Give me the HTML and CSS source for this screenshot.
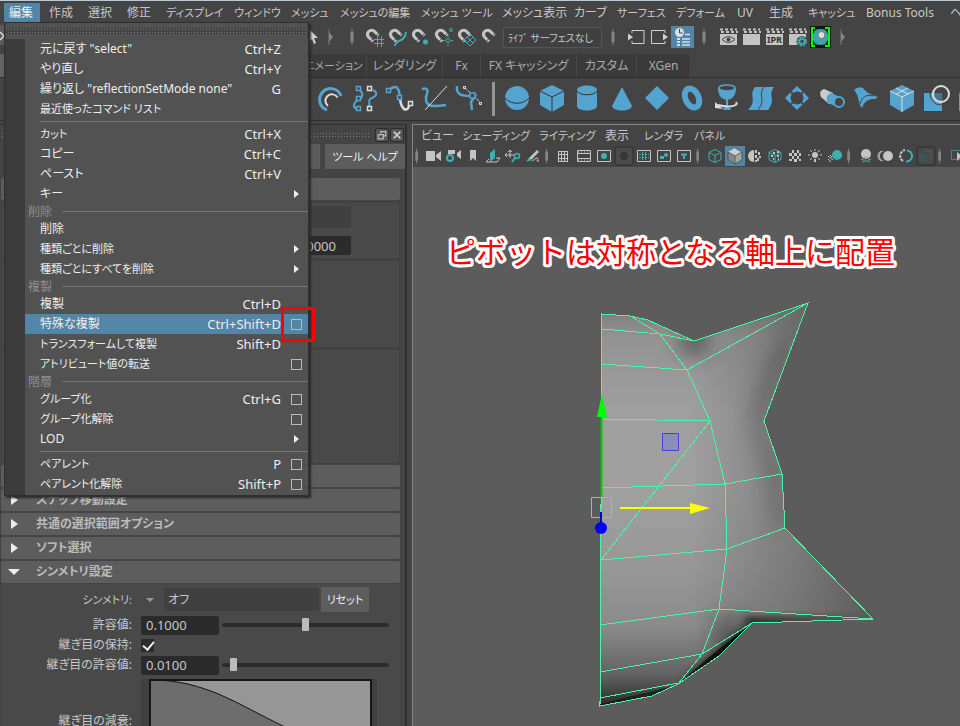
FILE: index.html
```
<!DOCTYPE html>
<html lang="ja">
<head>
<meta charset="utf-8">
<title>編集</title>
<link rel="stylesheet" href="styles.css">
</head>
<body>
<svg class="defs" aria-hidden="true">
  <defs>
    <symbol id="mark" viewBox="0 0 8 24"><path d="M4 4v16" stroke="#858585"/><path d="M4 7v10" stroke="#858585" stroke-width="3"/></symbol>
    <symbol id="mark-end" viewBox="0 0 8 24"><path d="M3 4v16" stroke="#777"/><path d="M3 7l4 5-4 5z" fill="#858585"/></symbol>
    <symbol id="magnet" viewBox="0 0 23 24"><path d="M9 16.500L4.500 12C1.500 8 6 3.500 10 6l4.500 4.500" fill="none" stroke="#c4c4c4" stroke-width="3"/><path d="M6 16.500l3-3M11.500 11.500l3-3" stroke="#444"/></symbol>
    <symbol id="clap" viewBox="0 0 23 24"><path d="M3 9h17v11H3z" fill="#c4c4c4"/><path d="M3 4.500h17M4 7h17" stroke="#c4c4c4" stroke-width="2" stroke-dasharray="3 2"/></symbol>
    <symbol id="frame" viewBox="0 0 20 20"><path d="M3.500 4.500h13v11h-13z" fill="none" stroke="#c4c4c4"/></symbol>
  </defs>
</svg>
<div class="app">
  <nav class="menubar">
    <button class="open">編集</button><button>作成</button><button>選択</button><button>修正</button><button class="k">ディスプレイ</button><button class="k">ウィンドウ</button><button class="k">メッシュ</button><button class="k">メッシュの編集</button><button class="k">メッシュ ツール</button><button>メッシュ表示</button><button>カーブ</button><button class="k">サーフェス</button><button class="k">デフォーム</button><button>UV</button><button>生成</button><button class="k">キャッシュ</button><button>Bonus Tools</button><button>ヘ</button>
  </nav>

  <div class="status">
    <svg class="edge" viewBox="0 0 5 24"><path d="M0 0h5v20H0z" fill="#5a5a5a"/><path d="M0 7l4 4-4 4" fill="none" stroke="#ddd" stroke-width="1.500"/></svg>
    <svg viewBox="0 0 23 24"><path d="M14 4v13l3-3 2 5 2-1-2-5h4z" fill="#d0d0d0"/></svg>
    <svg viewBox="0 0 23 24"><use href="#mark-end" x="8" width="8" height="24"/></svg>
    <svg viewBox="0 0 23 24"><use href="#mark" x="7" width="8" height="24"/></svg>
    <svg viewBox="0 0 23 24"><use href="#magnet" width="23" height="24"/><path d="M13.500 11v11M17.500 11v11M10 14.500h10M10 18.500h10" stroke="#3db0b4"/></svg>
    <svg viewBox="0 0 23 24"><use href="#magnet" width="23" height="24"/><path d="M8 21c0-7 10-3 11-14" fill="none" stroke="#3db0b4" stroke-width="2"/></svg>
    <svg viewBox="0 0 23 24"><use href="#magnet" width="23" height="24"/><circle cx="15.500" cy="17" r="2.500" fill="#3db0b4"/></svg>
    <svg viewBox="0 0 23 24"><use href="#magnet" width="23" height="24"/><g fill="none" stroke="#3db0b4"><circle cx="18" cy="5" r="1.500"/><circle cx="15" cy="15.500" r="2"/><path d="M15 10v2M15 19v2M10 15.500h2M18 15.500h2"/></g></svg>
    <svg viewBox="0 0 23 24"><use href="#magnet" width="23" height="24"/><path d="M8 15l6-6 6 6-6 6zM11 12l6 6M17 12l-6 6" fill="none" stroke="#3db0b4"/></svg>
    <svg viewBox="0 0 23 24"><use href="#magnet" x="1" width="23" height="24"/></svg>
    <input class="live" type="text" aria-label="ライブ サーフェス" value="ﾗｲﾌﾞ サーフェスなし">
    <svg viewBox="0 0 23 24"><use href="#mark" x="7" width="8" height="24"/></svg>
    <svg viewBox="0 0 23 24"><path d="M7 8V5.500h12v13H7V16" fill="none" stroke="#d0d0d0"/><path d="M3 8.500l5 3.500-5 3.500z" fill="#d0d0d0"/></svg>
    <svg viewBox="0 0 23 24"><path d="M17 8V5.500H3.500v13H17V16" fill="none" stroke="#d0d0d0"/><path d="M15 8.500l5 3.500-5 3.500z" fill="#d0d0d0"/></svg>
    <svg viewBox="0 0 23 24"><path d="M0 1h23v22H0z" fill="#5285a6"/><circle cx="8.500" cy="7.500" r="4.500" fill="#ddd"/><path d="M8.500 4v4h3" fill="none" stroke="#444"/><path d="M14 9.500h5M11 14h8M11 17h8M11 20h8" stroke="#ddd" stroke-width="1.500"/><path d="M6 14h3M6 17h3M6 20h3" stroke="#ddd" stroke-width="2"/></svg>
    <svg viewBox="0 0 23 24"><use href="#mark" x="6" width="8" height="24"/></svg>
    <svg viewBox="0 0 23 24"><use href="#clap" width="23" height="24"/><path d="M5 14.500q6.500-6 13 0q-6.500 6-13 0z" fill="#c4c4c4" stroke="#444"/><circle cx="11.500" cy="14.500" r="2" fill="#444"/></svg>
    <svg viewBox="0 0 23 24"><use href="#clap" width="23" height="24"/></svg>
    <svg viewBox="0 0 23 24"><use href="#clap" width="23" height="24"/><text x="4" y="18" class="ipr">IPR</text></svg>
    <svg viewBox="0 0 23 24"><use href="#clap" width="23" height="24"/><circle cx="16" cy="16.500" r="5.500" fill="#444"/><circle cx="16" cy="16.500" r="4" fill="none" stroke="#3db0b4" stroke-width="2" stroke-dasharray="2 1.140"/><circle cx="16" cy="16.500" r="2.500" fill="none" stroke="#3db0b4" stroke-width="1.500"/></svg>
    <svg viewBox="0 0 23 24"><path d="M1 1h21v22H1z" fill="#161616"/><path d="M6 3H3v18h3M16 3h4v18h-4" fill="none" stroke="#0f0" stroke-width="2"/><path d="M5 4h12v16H5z" fill="#444"/><circle cx="11.500" cy="12" r="8" fill="#3aa5ac"/><circle cx="12.500" cy="10" r="3.500" fill="#ddd" stroke="#777"/></svg>
    <svg viewBox="0 0 23 24"><use href="#mark-end" x="6" width="8" height="24"/></svg>
  </div>

  <div class="tabs">
    <button class="k">アニメーション</button><button>レンダリング</button><button>Fx</button><button>FX キャッシング</button><button>カスタム</button><button>XGen</button>
  </div>

  <div class="shelf">
    <svg viewBox="0 0 35 40"><path d="M15 31A11 11 0 1 1 29 17" fill="none" stroke="#55a3cf" stroke-width="3"/><path d="M16 27A6.500 6.500 0 1 1 25.500 18.500" fill="none" stroke="#ddd" stroke-width="2"/></svg>
    <svg viewBox="0 0 35 40"><g fill="none" stroke="#55a3cf" stroke-width="2"><path d="M11 30c-6-1-5-6 0-9 6-3 5-7 1-11M21 28c4-3-2-7 4-9 6-3 5-6 1-8"/></g><g fill="#444" stroke="#55a3cf" stroke-width="1.500"><path d="M9.500 7.500h4v4h-4zM9.500 17.500h4v4h-4zM9.500 27.500h4v4h-4z"/></g><path d="M20.500 7.500h4v4h-4zM20.500 27.500h4v4h-4z" fill="#444" stroke="#ddd" stroke-width="1.500"/></svg>
    <svg viewBox="0 0 35 40"><path d="M7 11c8-7 10-1 11 7" fill="none" stroke="#55a3cf" stroke-width="2.500"/><path d="M18 20c2 14 9 12 9 6" fill="none" stroke="#ddd" stroke-width="2.500"/><g fill="#444" stroke="#55a3cf" stroke-width="1.500"><path d="M4.500 9.500h4v4h-4zM15.500 16.500h4v4h-4z"/></g><path d="M26.500 22.500h4v4h-4z" fill="#444" stroke="#ddd" stroke-width="1.500"/></svg>
    <svg viewBox="0 0 35 40"><path d="M5 10c7-2 6 3 4 8-1 10 6 10 20 8" fill="none" stroke="#55a3cf" stroke-width="2.500"/><path d="M8 31L30 7" stroke="#ddd"/></svg>
    <svg viewBox="0 0 35 40"><path d="M5 7c-1 8 3 10 14 10l4 0-4 6 1 8" fill="none" stroke="#55a3cf" stroke-width="2.500"/><path d="M13 9l16 15" stroke="#ddd" stroke-dasharray="3 1"/><path d="M11.500 7.500h2v2h-2zM27.500 23.500h2v2h-2z" fill="#444" stroke="#ddd"/><path d="M18 14h5v5h-5z" fill="#444" stroke="#55a3cf" stroke-width="1.500"/></svg>
    <span class="divider"></span>
    <svg viewBox="0 0 35 40"><circle cx="17" cy="19" r="12" fill="#55a3cf"/><path d="M5 19c6 7 18 7 24 0" fill="none" stroke="#333"/></svg>
    <svg viewBox="0 0 35 40"><path d="M17 6l12 6v14l-12 7-12-7V12z" fill="#55a3cf"/><path d="M5 12l12 6 12-6M17 18v15" fill="none" stroke="#333"/></svg>
    <svg viewBox="0 0 35 40"><path d="M7 11c0-6 20-6 20 0v16c0 6-20 6-20 0z" fill="#55a3cf"/><path d="M7 12c2 5 18 5 20 0" fill="none" stroke="#333"/></svg>
    <svg viewBox="0 0 35 40"><path d="M17 8l10 19c-1 6-19 6-20 0z" fill="#55a3cf"/></svg>
    <svg viewBox="0 0 35 40"><path d="M17 7l12 12-12 12L5 19z" fill="#55a3cf"/></svg>
    <svg viewBox="0 0 35 40"><ellipse cx="17" cy="19" rx="6.500" ry="10" transform="rotate(-25 17 19)" fill="none" stroke="#55a3cf" stroke-width="6"/></svg>
    <svg viewBox="0 0 35 40"><path d="M8 9c0 10 6 11 8 12v7c-4 1-5 3 1 3s5-2 1-3v-7c2-1 8-2 8-12z" fill="#55a3cf"/><ellipse cx="17" cy="9" rx="8" ry="3" fill="#444" stroke="#55a3cf" stroke-width="1.500"/><path d="M26 23c3 4-7 6-18 3" fill="none" stroke="#ddd" stroke-width="2"/><path d="M5 23v6l8 1z" fill="#ddd"/></svg>
    <svg viewBox="0 0 35 40"><path d="M10 8h19c-7 9 3 11-6 23H3c10-10 0-14 7-23z" fill="#55a3cf"/><path d="M19 8c-7 9 3 11-6 23" fill="none" stroke="#444"/></svg>
    <svg viewBox="0 0 35 40"><path d="M17 7l12 12-12 12L5 19z" fill="#55a3cf"/><circle cx="17" cy="19" r="6.500" fill="#444"/><path d="M11 13l2 2M23 13l-2 2M11 25l2-2M23 25l-2-2" stroke="#444" stroke-width="2"/></svg>
    <svg viewBox="0 0 35 40"><path d="M9 10l9 4v10l-4 1-8-7c-2-5 0-7 3-8z" fill="#ccc"/><path d="M16 14l9 4-4 9-9-3c-1-5 0-9 4-10z" fill="#55a3cf"/><circle cx="24" cy="23" r="5" fill="#444" stroke="#55a3cf" stroke-width="2"/></svg>
    <svg viewBox="0 0 35 40"><path d="M4 11q4-4 9-2c4 5 8 7 15 9l-3 2c-8-1-12 5-13 9-4-4-2-11-8-18z" fill="#55a3cf"/><path d="M10 25c2-7 6-10 13-8" fill="none" stroke="#444"/></svg>
    <svg viewBox="0 0 35 40"><path d="M17 6l12 6v14l-12 7-12-7V12z" fill="#55a3cf"/><path d="M5 12l12 6 12-6M17 18v15M11 9l12 6M23 9l-12 6" fill="none" stroke="#ddd"/></svg>
    <svg viewBox="0 0 35 40"><path d="M4 14h18v18H4z" fill="#55a3cf"/><circle cx="21" cy="15" r="11" fill="none" stroke="#444"/><circle cx="21" cy="15" r="8" fill="#444" fill-opacity=".5" stroke="#ddd" stroke-width="2"/></svg>
    <svg viewBox="0 0 35 40"><path d="M4 14h18v18H4z" fill="#55a3cf"/></svg>
  </div>

  <main>
    <aside>
      <div class="titlebar"><span class="grip"></span>
        <button aria-label="切り離し"><svg viewBox="0 0 12 12"><path d="M4.500 4V2h6v5H8M1.500 5.500h6v5h-6z" fill="none" stroke="#bbb" stroke-width="1.500"/></svg></button>
        <button aria-label="閉じる"><svg viewBox="0 0 12 12"><path d="M2 2l8 8M10 2l-8 8" stroke="#ccc" stroke-width="2"/></svg></button>
      </div>
      <div class="toolrow"><button aria-label="リセット"></button><button class="k">ツール ヘルプ</button></div>
      <div class="section"></div>
      <div class="group first"><input class="dim" type="text" aria-label="名前"><input class="num" type="text" aria-label="値" value="0.0000"></div>
      <div class="group second"></div>
      <div class="group third"></div>
      <div class="section"></div>
      <button class="section"><i class="tri"></i>スナップ移動設定</button>
      <button class="section"><i class="tri"></i>共通の選択範囲オプション</button>
      <button class="section"><i class="tri"></i>ソフト選択</button>
      <button class="section"><i class="tri down"></i>シンメトリ設定</button>
      <div class="settings">
        <div class="row tall"><label class="k" for="sym">シンメトリ:</label><i class="drop"></i><select id="sym"><option>オフ</option></select><button class="k">リセット</button></div>
        <div class="row"><label for="tol">許容値:</label><input id="tol" class="value" type="text" value="0.1000"><input type="range" aria-label="許容値" value="50"></div>
        <div class="row"><label for="seam">継ぎ目の保持:</label><input id="seam" type="checkbox" checked></div>
        <div class="row"><label for="stol">継ぎ目の許容値:</label><input id="stol" class="value" type="text" value="0.0100"><input type="range" aria-label="継ぎ目の許容値" value="5"></div>
        <div class="row graph"><span>継ぎ目の減衰:</span>
          <svg viewBox="0 0 236 84"><path d="M0 0h236v84H0z" fill="#404040"/><path d="M10 1h220v83H10z" fill="#969696"/><path d="M10 1c54 0 86 24 132 46 22 10 35 18 50 37H10z" fill="#6d6d6d"/><path d="M10 1c54 0 86 24 132 46 22 10 35 18 50 37" fill="none" stroke="#111"/><path d="M9 84V1h221v83" fill="none" stroke="#151515" stroke-width="2"/></svg></div>
      </div>
    </aside>

    <section class="viewport">
      <nav class="panelmenu"><button>ビュー</button><button class="k">シェーディング</button><button class="k">ライティング</button><button>表示</button><button class="k">レンダラ</button><button class="k">パネル</button></nav>
      <div class="paneltools">
        <svg class="m" viewBox="0 0 11 20"><use href="#mark" y="-2" width="8" height="24"/></svg>
        <svg viewBox="0 0 20 20"><path d="M3 5h9v10H3zM13 9l5-4v10l-5-4z" fill="#c4c4c4"/></svg>
        <svg viewBox="0 0 20 20"><path d="M5 4h7v4H5zM14 7l4-3v9l-4-3z" fill="#c4c4c4"/><circle cx="7" cy="12" r="3" fill="#444" stroke="#3db0b4" stroke-width="2"/></svg>
        <svg viewBox="0 0 20 20"><path d="M7 4h6v11l-3-3-3 3z" fill="#c4c4c4"/></svg>
        <svg viewBox="0 0 20 20"><path d="M7 7l5-4v9l-5 4z" fill="#3db0b4"/><path d="M6 13l-3 3h11l3-4h-4" fill="none" stroke="#c4c4c4"/></svg>
        <svg viewBox="0 0 20 20"><path d="M7 12V4M2 9h9M5 6l2-2 2 2M4 7L2 9l2 2" fill="none" stroke="#c4c4c4"/><circle cx="14" cy="10" r="2.500" fill="none" stroke="#3db0b4" stroke-width="1.500"/><path d="M12 12l-3 4" stroke="#3db0b4" stroke-width="2"/></svg>
        <svg viewBox="0 0 20 20"><path d="M6 12l8-8 2 2-8 8z" fill="#c4c4c4"/><path d="M4 15l2-3 2 2z" fill="#3db0b4" stroke="#3db0b4"/><path d="M9 15c6-5 7-3 5 0h2" fill="none" stroke="#c4c4c4"/></svg>
        <svg class="m" viewBox="0 0 11 20"><use href="#mark" y="-2" width="8" height="24"/></svg>
        <svg viewBox="0 0 20 20"><path d="M4.500 5v11M7.500 5v11M10.500 5v11M13.500 5v11M4 5.500h10M4 8.500h10M4 12.500h10M4 15.500h10" stroke="#c4c4c4"/></svg>
        <svg viewBox="0 0 20 20"><use href="#frame" width="20" height="20"/><path d="M3 7.500h14M3 12.500h14" stroke="#c4c4c4"/><path d="M4 6h13M4 14h13" stroke="#c4c4c4" stroke-dasharray="1 2"/></svg>
        <svg viewBox="0 0 20 20"><use href="#frame" width="20" height="20"/><circle cx="10" cy="10" r="3" fill="#3db0b4"/></svg>
        <svg viewBox="0 0 20 20"><rect x="1" y="1" width="18" height="18" rx="2" fill="#4b4b4b" stroke="#2d2d2d"/><circle cx="10" cy="10" r="4" fill="#363636"/></svg>
        <svg viewBox="0 0 20 20"><use href="#frame" width="20" height="20"/><path d="M5 8.500h10M5 11.500h10M8.500 6v8M11.500 6v8" stroke="#3db0b4" stroke-dasharray="2 1"/></svg>
        <svg viewBox="0 0 20 20"><use href="#frame" width="20" height="20"/><path d="M6 13v-3h4v3z" fill="#3db0b4"/><circle cx="12" cy="9" r="2" fill="#3db0b4"/></svg>
        <svg viewBox="0 0 20 20"><use href="#frame" width="20" height="20"/><path d="M7 8.500h6M10 8v5" stroke="#3db0b4" stroke-width="2"/></svg>
        <svg class="m" viewBox="0 0 11 20"><use href="#mark" y="-2" width="8" height="24"/></svg>
        <svg viewBox="0 0 20 20"><path d="M10 3.500l6 3v7l-6 3-6-3v-7zM4 6.500l6 3 6-3M10 9.500v7" fill="none" stroke="#3db0b4"/></svg>
        <svg viewBox="0 0 20 20"><path d="M0 0h20v20H0z" fill="#5285a6"/><path d="M10 2l7 4v8l-7 4-7-4V6z" fill="#a5a5a5"/><path d="M10 2l7 4-7 4-7-4z" fill="#ccc"/><path d="M3 6l7 4v8l-7-4z" fill="#888"/><path d="M10 2l7 4v8l-7 4-7-4V6l7 4 7-4M10 10v8" fill="none" stroke="#333" stroke-width=".6"/></svg>
        <svg viewBox="0 0 20 20"><path d="M9 4a6 6 0 0 0 0 12z" fill="#c4c4c4"/><path d="M10 4h2v3h-2zM13 6h2v3h-2zM10 9h2v3h-2zM14 10h2v2h-2zM12 12h2v3h-2zM10 14h2v2h-2z" fill="#c4c4c4"/></svg>
        <svg viewBox="0 0 20 20"><path d="M10 3.500l6 3v7l-6 3-6-3v-7zM4 6.500l6 3 6-3M10 9.500v7" fill="none" stroke="#3db0b4"/><path d="M8 6h2v2H8zM12 5h2v2h-2zM6 9h2v2H6zM12 9h2v2h-2zM8 12h1v2H8zM13 12h1v2h-1z" fill="#c4c4c4"/></svg>
        <svg viewBox="0 0 20 20"><path d="M7 4h2v3H7zM12 4h2v3h-2zM4 7h3v3H4zM9 7h3v3H9zM14 7h2v3h-2zM7 10h2v3H7zM12 10h2v3h-2zM4 13h3v2H4zM9 13h3v3H9zM14 13h2v2h-2z" fill="#c4c4c4"/></svg>
        <svg viewBox="0 0 20 20"><circle cx="10" cy="9" r="3" fill="#c4c4c4"/><path d="M9 13h2v3H9z" fill="#c4c4c4"/><path d="M10 3v2M3 9h2M15 9h2M5 4l2 2M15 4l-2 2M5 14l2-2M15 14l-2-2" stroke="#c4c4c4"/></svg>
        <svg viewBox="0 0 20 20"><circle cx="12" cy="9" r="5" fill="#3db0b4"/><path d="M3 10l5 4M3 13l3 3M5 9l2 2" stroke="#c4c4c4"/></svg>
        <svg class="m" viewBox="0 0 11 20"><use href="#mark" y="-2" width="8" height="24"/></svg>
        <svg viewBox="0 0 20 20"><circle cx="10" cy="8" r="5" fill="#c4c4c4"/><path d="M5 13l3 1 2 2 2-2 3-1M6 15l2 1M14 15l-2 1M8 11l2 1 2-1" fill="none" stroke="#3db0b4"/></svg>
        <svg viewBox="0 0 20 20"><circle cx="12" cy="10" r="5" fill="#c4c4c4"/><path d="M7 5c-5 2-5 8 0 10M5 5c-4 2-4 8 0 10" fill="none" stroke="#c4c4c4"/></svg>
        <svg viewBox="0 0 20 20"><path d="M7 15a6 6 0 0 1 2-11" fill="none" stroke="#c4c4c4" stroke-width="2" stroke-dasharray="3 1"/><path d="M11 4.500a5.500 5.500 0 0 1-1 11" fill="none" stroke="#3db0b4" stroke-width="2"/></svg>
        <svg viewBox="0 0 20 20"><rect x="1" y="1" width="18" height="18" rx="2" fill="#484848" stroke="#2d2d2d"/><path d="M3 8h8v8H3z" fill="#3b5558"/><path d="M8 5h7v8" fill="none" stroke="#505050" stroke-width="2"/></svg>
        <svg class="m" viewBox="0 0 11 20"><use href="#mark" y="-2" width="8" height="24"/></svg>
        <svg viewBox="0 0 20 20"><path d="M4.500 4.500h11v9h-11z" fill="none" stroke="#3db0b4" stroke-dasharray="2 1"/><path d="M10 6v9l3-3h4z" fill="#c4c4c4"/></svg>
      </div>
      <svg class="scene" viewBox="413 167 547 559" preserveAspectRatio="xMinYMin slice">
        <defs>
          <linearGradient id="skin" x1="0" y1="314" x2="0" y2="706" gradientUnits="userSpaceOnUse"><stop offset="0" stop-color="#808080"/><stop offset=".06" stop-color="#939393"/><stop offset=".25" stop-color="#9f9f9f"/><stop offset=".45" stop-color="#a0a0a0"/><stop offset=".65" stop-color="#979797"/><stop offset=".8" stop-color="#8a8a8a"/><stop offset=".92" stop-color="#626262"/><stop offset="1" stop-color="#2a2a2a"/></linearGradient>
          <linearGradient id="side" x1="690" y1="0" x2="870" y2="0" gradientUnits="userSpaceOnUse"><stop offset="0" stop-color="#606060" stop-opacity="0"/><stop offset=".55" stop-color="#606060" stop-opacity=".5"/><stop offset="1" stop-color="#505050" stop-opacity=".8"/></linearGradient>
          <filter id="soft" x="-100%" y="-100%" width="300%" height="300%"><feGaussianBlur stdDeviation="10"/></filter>
          <filter id="soft-small" x="-50%" y="-100%" width="200%" height="300%"><feGaussianBlur stdDeviation="4"/></filter>
          <clipPath id="body"><path d="M602 314l28 2 18 4 46 21 114-38-44 118 18 53 3 54 88 91-121 4-33 33-41 28-26 12-52 10z"/></clipPath>
        </defs>
        <g clip-path="url(#body)">
          <path d="M590 300h300v420H590z" fill="url(#skin)"/>
          <path d="M590 300h300v420H590z" fill="url(#side)"/>
          <ellipse cx="694" cy="342" rx="14" ry="12" fill="#333" opacity=".7" filter="url(#soft)"/>
          <path d="M806 306l-44 115-10-2 20-60z" fill="#333" filter="url(#soft)" opacity=".55"/>
          <path d="M764 421l18 53 3 54-10-2-8-50-14-50z" fill="#333" filter="url(#soft)" opacity=".35"/>
          <path d="M752 618l-36 4 0 30z" fill="#222" opacity=".6" filter="url(#soft)"/>
          <path d="M743 618l130 2-124 5z" fill="#000" filter="url(#soft-small)"/>
          <path d="M752 621l-18 36-54 26 26-22z" fill="#000" filter="url(#soft-small)"/>
          <path d="M752 623l-33 33-41 28 30-26z" fill="#000" opacity=".6"/>
          <path d="M600 704l77-19-26 14-52 9z" fill="#111" opacity=".6"/>
        </g>
        <g class="wire">
          <path d="M602 314l28 2 18 4 46 21 114-38-44 118 18 53 3 54 88 91-121 4-33 33-41 28-26 12-52 10z"/>
          <path d="M630 316l30 18 27 36 23 51 15 63 2 65-8 60-17 45-24 30M602 329l58 5 34 7M602 364l85 6 121-67M602 419l108 2h54M601 488l124-4 57-10M710 421L601 560l126-11 58-21M600 625l119-16 154 10M600 672l102-18 50-31M600 698l78-15"/>
        </g>
        <path d="M601.500 416v82" stroke="#0c0" stroke-width="2"/><path d="M602 394l5 23h-10z" fill="#0f0"/>
        <path d="M662.500 433.500h16v17h-16z" fill="#8080cc" fill-opacity=".6" stroke="#44d"/>
        <path d="M620 508h71" stroke="#ff0" stroke-width="2"/><path d="M690 503l20 5-20 6z" fill="#ff0"/>
        <path d="M591.500 497.500h20v20h-20z" fill="none" stroke="#5bd0ea"/><path d="M601 512v12" stroke="#00d" stroke-width="2"/><circle cx="601" cy="528" r="6" fill="#00f"/>
        <text x="446" y="263" class="callout">ピボットは対称となる軸上に配置</text>
      </svg>
    </section>
  </main>

  <div class="menu">
    <div class="tear"></div>
    <div class="items">
      <button>元に戻す "select"<kbd>Ctrl+Z</kbd><i></i></button>
      <button>やり直し<kbd>Ctrl+Y</kbd><i></i></button>
      <button>繰り返し "reflectionSetMode none"<kbd>G</kbd><i></i></button>
      <button class="k">最近使ったコマンド リスト<kbd></kbd><i></i></button>
      <hr>
      <button class="k">カット<kbd>Ctrl+X</kbd><i></i></button>
      <button>コピー<kbd>Ctrl+C</kbd><i></i></button>
      <button>ペースト<kbd>Ctrl+V</kbd><i></i></button>
      <button>キー<kbd></kbd><i class="sub"></i></button>
      <h2>削除</h2>
      <button>削除<kbd></kbd><i></i></button>
      <button class="k">種類ごとに削除<kbd></kbd><i class="sub"></i></button>
      <button class="k">種類ごとにすべてを削除<kbd></kbd><i class="sub"></i></button>
      <h2>複製</h2>
      <button>複製<kbd>Ctrl+D</kbd><i></i></button>
      <button class="active">特殊な複製<kbd>Ctrl+Shift+D</kbd><i class="box"></i><span class="ring"></span></button>
      <button class="k">トランスフォームして複製<kbd>Shift+D</kbd><i></i></button>
      <button class="k">アトリビュート値の転送<kbd></kbd><i class="box"></i></button>
      <h2>階層</h2>
      <button class="k">グループ化<kbd>Ctrl+G</kbd><i class="box"></i></button>
      <button class="k">グループ化解除<kbd></kbd><i class="box"></i></button>
      <button>LOD<kbd></kbd><i class="sub"></i></button>
      <hr>
      <button class="k">ペアレント<kbd>P</kbd><i class="box"></i></button>
      <button class="k">ペアレント化解除<kbd>Shift+P</kbd><i class="box"></i></button>
    </div>
  </div>
</div>
</body>
</html>
```
FILE: styles.css
```
* { box-sizing: border-box; }
html, body { height: 100%; margin: 0; }
body, button, input, select, kbd {
  font-family: "Noto Sans", "Noto Sans CJK JP", sans-serif;
  font-size: 12px;
  line-height: 16px;
  font-feature-settings: "palt";
  color: #c8c8c8;
}
button, input, select { border: 0; margin: 0; padding: 0; background: none; white-space: nowrap; }
.k { font-size: 11px; }
.defs { position: absolute; width: 0; height: 0; }
.app {
  position: relative;
  display: flex;
  flex-direction: column;
  height: 100vh;
  overflow: hidden;
  background: #444;
  border-top: 1px solid #b9cbd6;
}
.app svg { flex: none; display: block; }

.menubar {
  display: grid;
  grid-template-columns: 39px 39px 39px 39px 68px 57px 49px 81px 81px 72px 43px 59px 61px 32px 39px 58px 84px 40px;
  padding: 2px 0 0 2px;
  height: 22px;
  flex: none;
}
.menubar button { text-align: left; padding-left: 8px; overflow: visible; }
.menubar .open { background: #5285a6; color: #eee; margin: 0 1px 0 2px; padding-left: 5px; }

.status { display: flex; align-items: center; height: 28px; flex: none; }
.status svg { width: 23px; height: 24px; }
.status .edge { width: 5px; margin-right: 290px; }
.live { width: 99px; height: 21px; margin-left: 1px; padding: 0 4px; font-size: 10px; border: 1px solid #555; border-radius: 2px; background: #404040; }
.ipr { font-family: "Noto Sans", sans-serif; font-size: 9px; font-weight: bold; fill: #333; }

.tabs {
  display: grid;
  grid-template-columns: 76px 76px 38px 96px 60px 54px;
  margin-top: 3px;
  padding-left: 291px;
  height: 24px;
  flex: none;
  border-bottom: 1px solid #2e2e2e;
  background: linear-gradient(#636363, #636363) no-repeat 0 0 / 5px 100%;
}
.tabs button { background: #3a3a3a; color: #aaa; border-right: 1px solid #494949; }
.tabs button:last-child { border-radius: 0 3px 0 0; }

.shelf { display: flex; align-items: center; padding-left: 312px; height: 43px; flex: none; overflow: hidden; border-bottom: 1px solid #2e2e2e; }
.shelf svg { width: 35px; height: 40px; }
.divider { flex: none; width: 3px; height: 34px; margin: 0 5px; background: #969696; }

main { display: flex; flex: 1; min-height: 0; padding-top: 3px; }
aside { flex: 0 0 407px; display: flex; flex-direction: column; border-top: 1px solid #303030; border-right: 2px solid #303030; padding-left: 1px; }
.titlebar { display: flex; align-items: center; gap: 1px; height: 19px; padding-right: 1px; flex: none; }
.grip, .tear {
  background-image: radial-gradient(circle, #808080 0 1px, transparent 1px);
  background-size: 3px 3px;
}
.grip { flex: 1; height: 6px; margin-right: 4px; }
.titlebar button { width: 14px; height: 14px; padding: 1px; border: 1px solid #2b2b2b; border-radius: 2px; background: #555; }
.titlebar svg { width: 10px; height: 10px; }
.toolrow { display: flex; justify-content: flex-end; gap: 5px; height: 25px; flex: none; }
.toolrow button { background: #5d5d5d; color: #eee; width: 80px; }
.section {
  flex: none;
  display: flex;
  align-items: center;
  height: 22px;
  margin: 1px 5px 1px 0;
  background: #5d5d5d;
  border-radius: 2px;
  color: #bbb;
  font-size: 12px;
  font-weight: bold;
}
.toolrow + .section { margin-top: 9px; }
.tri { width: 0; height: 0; margin: 0 18px 0 10px; border: 5px solid transparent; border-left: 7px solid #eee; border-right: 0; }
.tri.down { margin: 0 16px 0 7px; border: 6px solid transparent; border-top: 6px solid #eee; border-bottom: 0; }
.group { flex: none; margin-right: 5px; background: #494949; border: 1px solid #414141; border-top-width: 2px; }
.first { height: 58px; display: flex; flex-direction: column; gap: 8px; align-items: flex-end; padding: 3px 48px 0 0; }
.second { height: 89px; }
.third { height: 116px; }
.dim { width: 120px; height: 22px; background: #404040; border-radius: 2px; }
.num { width: 86px; height: 19px; padding-right: 15px; text-align: right; font-size: 13px; background: #2b2b2b; border-radius: 2px; }
.settings { display: flex; flex-direction: column; flex: 1; min-height: 0; padding-top: 2px; margin-right: 5px; background: #494949; }
.row { display: flex; align-items: center; height: 20px; flex: none; }
.row label, .row > span { width: 131px; margin-right: 9px; flex: none; text-align: right; }
.tall { height: 27px; margin-bottom: 2px; }
.drop { width: 0; height: 0; margin: 0 10px 0 5px; border: 4px solid transparent; border-top-color: #999; border-bottom: 0; }
select { appearance: none; width: 155px; height: 23px; padding-left: 4px; background: #404040; border-radius: 2px; }
.tall button { width: 48px; height: 25px; margin-left: 2px; background: #5d5d5d; color: #eee; }
.value { width: 78px; height: 19px; padding: 0 5px; font-size: 13px; background: #2b2b2b; border-radius: 2px; }
input[type=checkbox] { appearance: none; width: 13px; height: 13px; background: #2b2b2b; }
input[type=checkbox]:checked::before { content: ""; display: block; width: 5px; height: 9px; margin: 0 0 0 4px; border: solid #eee; border-width: 0 2px 2px 0; rotate: 40deg; }
input[type=range] { appearance: none; width: 167px; height: 14px; margin-left: 3px; }
input[type=range]::-webkit-slider-runnable-track { height: 4px; border-radius: 2px; background: #2b2b2b; }
input[type=range]::-webkit-slider-thumb { appearance: none; width: 7px; height: 13px; margin-top: -5px; border-radius: 1px; background: #bbb; }
.graph { height: 87px; margin-top: 2px; }
.graph svg { width: 236px; height: 84px; }

.viewport { flex: 1; min-width: 0; display: flex; flex-direction: column; margin-left: 5px; border: solid #858585; border-width: 1px 0 0 1px; overflow: hidden; }
.panelmenu { display: grid; grid-template-columns: 41px 77px 66px 39px 50px 60px; padding-left: 8px; height: 21px; flex: none; }
.panelmenu button { text-align: left; }
.paneltools { display: flex; height: 21px; flex: none; }
.paneltools svg { width: 20px; height: 20px; }
.paneltools .m { width: 10px; margin-right: 1px; }
.paneltools .m:first-child { margin-right: 0; }
.viewport .scene { flex: 1; width: 100%; min-height: 0; background: #5c5c5c; }
.wire { fill: none; stroke: #4cf5a4; shape-rendering: crispEdges; }
.callout { font-family: "Noto Sans CJK JP", sans-serif; font-size: 30px; font-feature-settings: "palt" 0; fill: #f00; stroke: #fff; stroke-width: 6px; stroke-linejoin: round; paint-order: stroke; }

.menu {
  position: absolute;
  top: 21px;
  left: 4px;
  width: 305px;
  background: #525252;
  border: 1px solid #303030;
  box-shadow: 2px 2px 2px #2a2a2a;
}
.tear { height: 16px; padding: 5px 1px 5px; background-color: #444; background-origin: content-box; background-clip: content-box; border: solid #444; border-width: 0 1px; }
.items { display: flex; flex-direction: column; padding-bottom: 1px; border-left: 20px solid #3b3b3b; }
.items button { position: relative; display: flex; align-items: center; height: 20px; padding-left: 15px; color: #eee; }
.items kbd { margin-left: auto; font-size: 13px; color: #eee; }
.items i { flex: none; width: 11px; height: 11px; margin: 0 6px 0 10px; }
.items .box { border: 1px solid #bbb; }
.items .sub { width: 0; height: 0; margin: 0 9px 0 14px; border: 4px solid transparent; border-left: 5px solid #eee; border-right: 0; }
.items .active { background: #5285a6; }
.ring { position: absolute; right: -7px; top: -7px; width: 34px; height: 35px; border: 3px solid #f00; border-radius: 2px; }
.items hr { width: 268px; height: 1px; margin: 2px 0 2px 15px; border: 0; background: #757575; }
.items h2 { display: flex; align-items: center; gap: 10px; height: 15px; margin: 0; padding-left: 3px; font-size: 12px; font-weight: normal; color: #8e8e8e; }
.items h2::after { content: ""; flex: 1; height: 1px; background: #757575; }
```
